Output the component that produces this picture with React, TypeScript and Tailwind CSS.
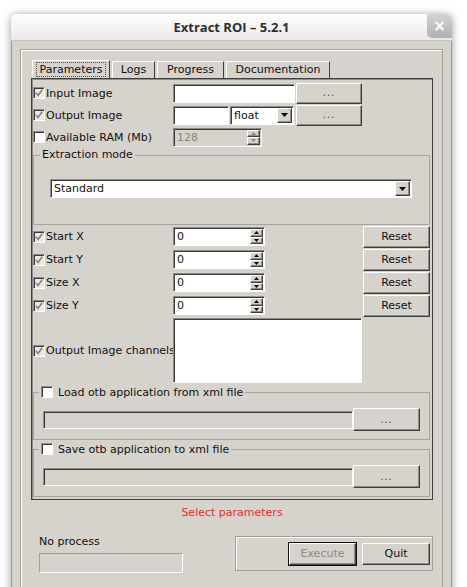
import type { ReactNode } from "react";

const raised =
  "border border-t-white border-l-white border-r-[#3f3f3f] border-b-[#3f3f3f] shadow-[inset_-1px_-1px_0_#8f8c87]";
const sunken =
  "border border-t-[#8f8c87] border-l-[#8f8c87] border-r-white border-b-white shadow-[inset_1px_1px_0_#3a3a3a]";

function Check({ checked, disabled }: { checked?: boolean; disabled?: boolean }) {
  return (
    <span
      className={`flex h-[12px] w-[12px] shrink-0 items-center justify-center ${sunken} ${
        disabled ? "bg-[#ebe9e5]" : "bg-white"
      }`}
    >
      {checked ? (
        <svg width="8" height="8" viewBox="0 0 8 8">
          <path d="M0.8 3.8 L3 6.4 L7.2 0.8" fill="none" stroke="#85837f" strokeWidth="1.6" />
        </svg>
      ) : null}
    </span>
  );
}

function Label({ text, checked = true }: { text: string; checked?: boolean }) {
  return (
    <div className="flex w-[140px] shrink-0 items-center">
      <Check checked={checked} disabled={checked} />
      <span className="ml-[1px] whitespace-nowrap pt-[1px]">{text}</span>
    </div>
  );
}

function Button({ children, className = "" }: { children: ReactNode; className?: string }) {
  return (
    <div className={`flex shrink-0 items-center justify-center bg-[#d6d2cc] ${raised} ${className}`}>
      {children}
    </div>
  );
}

function Dots() {
  return <span className="text-[10px] leading-none tracking-[1px] text-[#4a4845]">...</span>;
}

function Arrow({ dir, color = "#000" }: { dir: "up" | "down"; color?: string }) {
  return (
    <svg width="5" height="3" viewBox="0 0 5 3">
      <path d={dir === "up" ? "M2.5 0 L5 3 L0 3 Z" : "M0 0 L5 0 L2.5 3 Z"} fill={color} />
    </svg>
  );
}

function Spin({ value, w, disabled }: { value: string; w: string; disabled?: boolean }) {
  return (
    <div className={`flex h-[19px] shrink-0 ${w} ${sunken} ${disabled ? "bg-[#d6d2cc]" : "bg-white"}`}>
      <span className={`flex-1 pl-[3px] pt-[2px] ${disabled ? "text-[#8a8783]" : ""}`}>{value}</span>
      <div className="my-[1px] mr-[1px] flex w-[13px] flex-col">
        <div className={`flex flex-1 items-center justify-center bg-[#d6d2cc] ${raised}`}>
          <Arrow dir="up" color={disabled ? "#8a8783" : "#000"} />
        </div>
        <div className={`flex flex-1 items-center justify-center bg-[#d6d2cc] ${raised}`}>
          <Arrow dir="down" color={disabled ? "#8a8783" : "#000"} />
        </div>
      </div>
    </div>
  );
}

function Combo({ value, w }: { value: string; w: string }) {
  return (
    <div className={`flex h-[19px] shrink-0 items-center bg-white ${w} ${sunken}`}>
      <span className="flex-1 pl-[3px] pt-[1px]">{value}</span>
      <div className={`mr-[1px] flex h-[15px] w-[15px] items-center justify-center bg-[#d6d2cc] ${raised}`}>
        <svg width="7" height="4" viewBox="0 0 7 4">
          <path d="M0 0 L7 0 L3.5 4 Z" fill="#000" />
        </svg>
      </div>
    </div>
  );
}

function FileGroup({ title, mt }: { title: string; mt: string }) {
  return (
    <fieldset className={`${mt} border border-[#a7a49f] pl-[5px]`}>
      <legend className="px-[2px]">
        <span className="flex h-[14px] items-center">
          <Check />
          <span className="ml-[5px] whitespace-nowrap pt-[1px]">{title}</span>
        </span>
      </legend>
      <div className="flex items-center pb-[8px] pl-[4px] pt-[9px]">
        <div className={`h-[18px] w-[310px] bg-[#d6d2cc] ${sunken}`} />
        <Button className="h-[23px] w-[67px]">
          <Dots />
        </Button>
      </div>
    </fieldset>
  );
}

function ParamRow({ label }: { label: string }) {
  return (
    <div className="flex h-[23px] items-center">
      <Label text={label} />
      <Spin value="0" w="w-[92px]" />
      <Button className="ml-auto h-[22px] w-[67px]">Reset</Button>
    </div>
  );
}

export default function App() {
  return (
    <div className="h-[587px] w-[467px] overflow-hidden bg-white pl-[11px] pt-[14px] font-['DejaVu_Sans',sans-serif] text-[11px] leading-[14px] text-[#111]">
      <div className="flex h-[620px] w-[441px] flex-col rounded-t-[6px] shadow-[0_1px_8px_rgba(0,0,0,0.4)]">
        <div className="relative flex h-[27px] shrink-0 items-center justify-center rounded-t-[6px] border-b border-[#c4c2be] bg-gradient-to-b from-white to-[#eae9e7]">
          <span className="font-['Open_Sans',sans-serif] text-[13px] font-bold text-[#2e2e2e]">Extract ROI – 5.2.1</span>
          <div className="absolute right-0 top-0 flex h-[24px] w-[25px] items-center justify-center rounded-bl-[5px] rounded-tr-[6px] bg-gradient-to-b from-[#d4d4d4] to-[#b0b0b0] text-[15px] font-bold text-white">
            ×
          </div>
        </div>

        <div className="flex-1 border-x border-[#9e9b96] bg-[#d6d2cc] px-[8px] pt-[8px]">
          <div className="h-[600px] border border-[#a3a09b] pl-[10px] pr-[9px] pt-[10px] shadow-[inset_1px_1px_0_#fff]">
            {/* tabs */}
            <div className="ml-[1px] flex h-[18px] items-end gap-[2px]">
              <div className="flex h-[18px] w-[78px] items-center justify-center border-l border-r border-t border-l-white border-r-[#3f3f3f] border-t-white">
                <span className="border border-dotted border-[#555] px-[3px] leading-[13px]">Parameters</span>
              </div>
              {[
                ["Logs", "w-[43px]"],
                ["Progress", "w-[67px]"],
                ["Documentation", "w-[104px]"],
              ].map(([t, w]) => (
                <div
                  key={t}
                  className={`flex h-[17px] items-center justify-center border-l border-r border-t border-l-white border-r-[#3f3f3f] border-t-white ${w}`}
                >
                  {t}
                </div>
              ))}
            </div>

            {/* pane */}
            <div className="flex h-[422px] w-[402px] flex-col border border-[#3f3f3f] p-[1px] pr-[2px] pt-[3px] shadow-[inset_1px_1px_0_#8f8c87]">
              <div className="flex h-[22px] items-center">
                <Label text="Input Image" />
                <div className={`h-[19px] w-[122px] bg-white ${sunken}`} />
                <Button className="ml-[1px] h-[21px] w-[66px]">
                  <Dots />
                </Button>
              </div>
              <div className="flex h-[22px] items-center">
                <Label text="Output Image" />
                <div className={`h-[19px] w-[56px] bg-white ${sunken}`} />
                <Combo value="float" w="ml-[1px] w-[64px]" />
                <Button className="ml-[2px] h-[21px] w-[66px]">
                  <Dots />
                </Button>
              </div>
              <div className="flex h-[22px] items-center">
                <Label text="Available RAM (Mb)" checked={false} />
                <Spin value="128" w="w-[89px]" disabled />
              </div>

              <fieldset className="border border-[#a7a49f] pl-[6px]">
                <legend className="px-[2px] leading-[14px]">Extraction mode</legend>
                <div className="h-[62px] pl-[10px] pt-[17px]">
                  <Combo value="Standard" w="w-[362px]" />
                </div>
              </fieldset>

              <ParamRow label="Start X" />
              <ParamRow label="Start Y" />
              <ParamRow label="Size X" />
              <ParamRow label="Size Y" />

              <div className="flex h-[67px] items-center">
                <Label text="Output Image channels" />
                <div className={`h-[65px] w-[189px] bg-white ${sunken}`} />
              </div>

              <FileGroup title="Load otb application from xml file" mt="mt-[1px]" />
              <FileGroup title="Save otb application to xml file" mt="mt-[2px]" />
            </div>

            <div className="mt-[6px] text-center text-[#e0312b]">Select parameters</div>

            <div className="mt-[15px] flex items-start justify-between">
              <div className="ml-[8px] flex flex-col">
                <span>No process</span>
                <div className="mt-[4px] h-[20px] w-[144px] border border-[#a3a09b] border-b-white border-r-white" />
              </div>
              <div className="mt-[1px] flex h-[35px] w-[198px] items-center justify-end gap-[5px] border border-[#a3a09b] pr-[2px] shadow-[inset_1px_1px_0_#fff]">
                <div className="flex h-[24px] w-[69px] items-center justify-center border border-[#111] bg-[#d6d2cc]">
                  <div className={`flex h-full w-full items-center justify-center text-[#8d8a86] ${raised}`}>Execute</div>
                </div>
                <Button className="h-[22px] w-[68px]">Quit</Button>
              </div>
            </div>
          </div>
        </div>
      </div>
    </div>
  );
}
